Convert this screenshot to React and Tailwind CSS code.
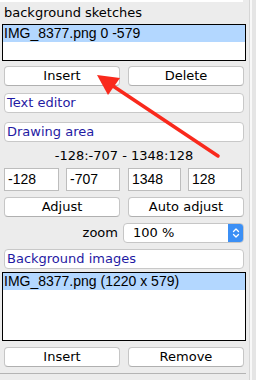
import React from "react";

const font = { fontFamily: '"DejaVu Sans", "Liberation Sans", sans-serif' };
const helv = { fontFamily: '"Liberation Sans", Arial, sans-serif' };

function Btn({ children, className = "" }) {
  return (
    <div
      className={
        "h-[20px] bg-white border border-[#c6c6c6] border-b-[#b0b0b0] rounded-[4px] flex items-center justify-center text-[13px] leading-[18px] text-black " +
        className
      }
    >
      {children}
    </div>
  );
}

function LinkBox({ children }) {
  return (
    <div className="h-[20px] w-[240px] ml-[4px] bg-white border border-[#c8c8c8] rounded-[4px] flex items-center pl-[2px] text-[13px] leading-[18px] text-[#1f1aa3]">
      {children}
    </div>
  );
}

function Field({ value, w, ml }) {
  return (
    <div
      className={
        "h-[23px] bg-white border border-[#bdbdbd] flex items-center pl-[3px] text-[14px] text-black " +
        w +
        " " +
        ml
      }
      style={helv}
    >
      {value}
    </div>
  );
}

export default function App() {
  return (
    <div
      className="relative w-[256px] h-[380px] bg-[#ececec] overflow-hidden flex"
      style={font}
    >
      <div className="w-[249px] flex flex-col">
        <div className="h-[2px] w-[243px] bg-white" />
        <div className="h-[22px] pt-[3px] pl-[4px] text-[13px] leading-[16px] text-black">
          background sketches
        </div>
        <div className="ml-[2px] w-[244px] h-[37px] bg-white border border-black">
          <div
            className="h-[17px] bg-[#b3d7ff] text-[14px] leading-[17px] pl-[1px] text-black"
            style={helv}
          >
            IMG_8377.png 0 -579
          </div>
        </div>
        <div className="mt-[5px] flex pl-[4px] gap-[8px]">
          <Btn className="w-[116px]">Insert</Btn>
          <Btn className="w-[116px]">Delete</Btn>
        </div>
        <div className="mt-[7px]">
          <LinkBox>Text editor</LinkBox>
        </div>
        <div className="mt-[9px]">
          <LinkBox>Drawing area</LinkBox>
        </div>
        <div className="mt-[4px] h-[20px] w-[248px] text-center text-[13px] leading-[20px] text-black">
          -128:-707 - 1348:128
        </div>
        <div className="mt-[2px] flex">
          <Field value="-128" w="w-[55px]" ml="ml-[4px]" />
          <Field value="-707" w="w-[54px]" ml="ml-[7px]" />
          <Field value="1348" w="w-[53px]" ml="ml-[8px]" />
          <Field value="128" w="w-[54px]" ml="ml-[7px]" />
        </div>
        <div className="mt-[6px] flex pl-[4px] gap-[8px]">
          <Btn className="w-[116px]">Adjust</Btn>
          <Btn className="w-[116px]">Auto adjust</Btn>
        </div>
        <div className="mt-[6px] flex items-center h-[20px]">
          <div className="w-[120px] text-right pr-[2px] text-[13px] text-black">
            zoom
          </div>
          <div className="ml-[3px] w-[121px] h-[20px] bg-white border border-[#c6c6c6] rounded-[4px] flex items-center overflow-hidden">
            <div className="flex-1 pl-[9px] text-[13px] leading-[18px] text-black">
              100 %
            </div>
            <div className="w-[16px] h-[20px] -mr-[1px] bg-[#3b8ff5] rounded-r-[4px] flex items-center justify-center">
              <svg width="8" height="12" viewBox="0 0 8 12">
                <path
                  d="M1.5 4.5 L4 2 L6.5 4.5 M1.5 7.5 L4 10 L6.5 7.5"
                  stroke="white"
                  strokeWidth="1.3"
                  fill="none"
                  strokeLinecap="round"
                  strokeLinejoin="round"
                />
              </svg>
            </div>
          </div>
        </div>
        <div className="mt-[6px]">
          <LinkBox>Background images</LinkBox>
        </div>
        <div className="mt-[3px] ml-[2px] w-[244px] h-[69px] bg-white border border-black">
          <div
            className="h-[17px] bg-[#b3d7ff] text-[14px] leading-[17px] pl-[1px] text-black"
            style={helv}
          >
            IMG_8377.png (1220 x 579)
          </div>
        </div>
        <div className="mt-[6px] flex pl-[4px] gap-[8px]">
          <Btn className="w-[116px]">Insert</Btn>
          <Btn className="w-[116px]">Remove</Btn>
        </div>
        <div className="mt-[6px] h-[1px] w-[246px] bg-[#b4b4b4]" />
      </div>
      <div className="w-[1px] bg-[#d6d6d6]" />
      <div className="w-[2px] bg-[#f8f8f8]" />
      <div className="flex-1 bg-[#e5e5e5]" />

      <svg
        className="absolute left-0 top-0 pointer-events-none"
        width="256"
        height="380"
        viewBox="0 0 256 380"
      >
        <line
          x1="218"
          y1="156"
          x2="110"
          y2="84"
          stroke="#f9291c"
          strokeWidth="3.5"
          strokeLinecap="round"
        />
        <polygon points="97,75 120,78 108,95" fill="#f9291c" />
      </svg>
    </div>
  );
}
